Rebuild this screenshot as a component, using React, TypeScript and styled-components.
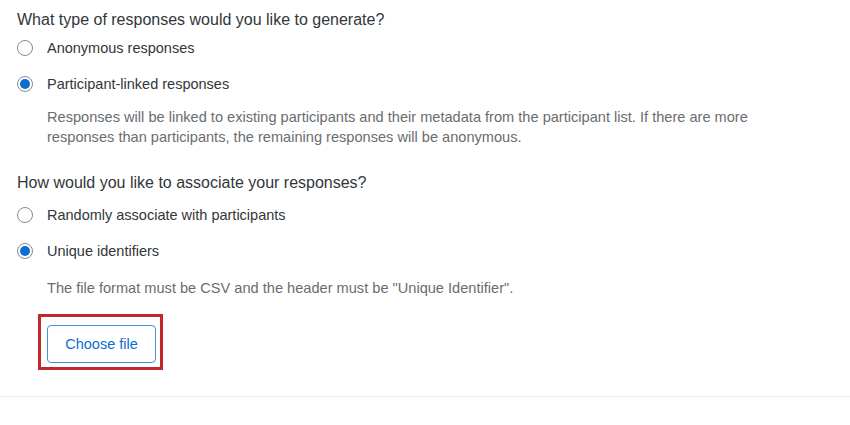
import React, { useState } from "react";
import styled, { createGlobalStyle } from "styled-components";

const GlobalStyle = createGlobalStyle`
  body {
    margin: 0;
    background: #fff;
    font-family: "Liberation Sans", Arial, sans-serif;
    color: #32363a;
  }
`;

export const Page = styled.div`
  width: 850px;
  height: 425px;
`;

export const Content = styled.div`
  padding: 10px 17px 0;
  height: 397px;
  box-sizing: border-box;
  border-bottom: 1px solid #e9e9e9;
`;

export const Question = styled.div<{ $gap?: number }>`
  font-size: 16px;
  line-height: 20px;
  color: #32363a;
  margin-top: ${(p) => p.$gap ?? 0}px;
`;

export const Options = styled.div<{ $gap?: number }>`
  margin-top: ${(p) => p.$gap ?? 0}px;
`;

export const OptionRow = styled.label`
  display: flex;
  align-items: center;
  height: 36px;
  cursor: pointer;
  font-size: 14.5px;
  color: #32363a;
`;

export const RadioCircle = styled.span<{ $checked: boolean }>`
  width: 16px;
  height: 16px;
  box-sizing: border-box;
  border-radius: 50%;
  border: 1px solid #8a8a8a;
  background: #fff;
  margin: 0 14px 0 0;
  display: flex;
  align-items: center;
  justify-content: center;
  flex-shrink: 0;

  &::after {
    content: "";
    width: 10px;
    height: 10px;
    border-radius: 50%;
    background: ${(p) => (p.$checked ? "#0b6ed0" : "transparent")};
  }
`;

export const Hint = styled.p<{ $gap: number }>`
  margin: ${(p) => p.$gap}px 0 0 30px;
  font-size: 14.6px;
  line-height: 20px;
  color: #6a6d70;
  max-width: 740px;
`;

export const Highlight = styled.div`
  display: inline-flex;
  margin: 16px 0 0 21px;
  padding: 8px 4px 4px 6px;
  border: 3px solid #c1272d;
`;

export const FileButton = styled.button`
  width: 109px;
  height: 38px;
  border: 1px solid #4a8fdb;
  border-radius: 4px;
  background: #fff;
  color: #0b6ed0;
  font-family: "Liberation Sans", Arial, sans-serif;
  font-size: 14.5px;
  cursor: pointer;
`;

interface IRadioGroup {
  options: string[];
  value: number;
  gap?: number;
  onChange: (i: number) => void;
}

const RadioGroup: React.FC<IRadioGroup> = ({ options, value, gap, onChange }) => (
  <Options $gap={gap}>
    {options.map((opt, i) => (
      <OptionRow key={opt} onClick={() => onChange(i)}>
        <RadioCircle $checked={value === i} />
        {opt}
      </OptionRow>
    ))}
  </Options>
);

export default function App() {
  const [type, setType] = useState(1);
  const [assoc, setAssoc] = useState(1);

  return (
    <Page>
      <GlobalStyle />
      <Content>
        <Question>What type of responses would you like to generate?</Question>
        <RadioGroup
          options={["Anonymous responses", "Participant-linked responses"]}
          value={type}
          onChange={setType}
        />
        <Hint $gap={5}>
          Responses will be linked to existing participants and their metadata from the
          participant list. If there are more responses than participants, the remaining
          responses will be anonymous.
        </Hint>
        <Question $gap={26}>How would you like to associate your responses?</Question>
        <RadioGroup
          options={["Randomly associate with participants", "Unique identifiers"]}
          value={assoc}
          gap={4}
          onChange={setAssoc}
        />
        <Hint $gap={9}>The file format must be CSV and the header must be "Unique Identifier".</Hint>
        <Highlight>
          <FileButton>Choose file</FileButton>
        </Highlight>
      </Content>
    </Page>
  );
}
